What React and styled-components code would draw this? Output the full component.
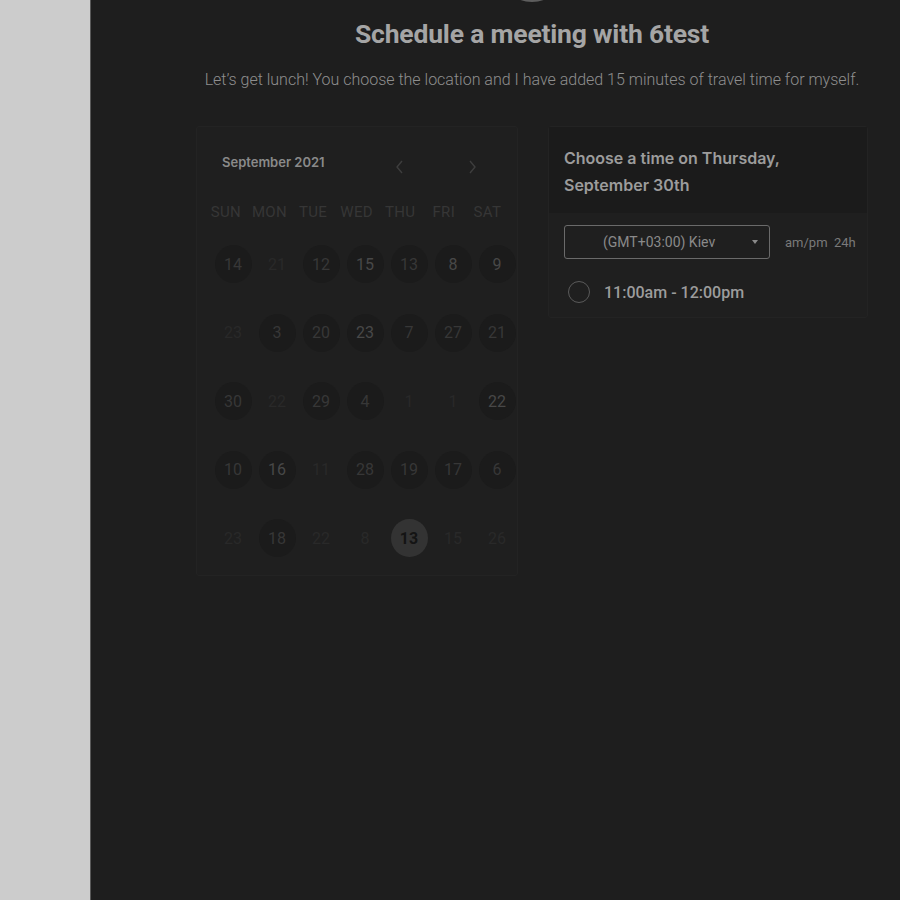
import React from 'react'
import styled, { createGlobalStyle } from 'styled-components'

const GlobalStyle = createGlobalStyle`
  html, body {
    margin: 0;
    padding: 0;
    background: #1e1e1e;
  }
  body {
    font-family: Roboto, "Liberation Sans", sans-serif;
  }
`

const weekdays = ['SUN', 'MON', 'TUE', 'WED', 'THU', 'FRI', 'SAT']

// kind: c = circle, h = circle with brighter number, o = off (no circle), s = selected
const weeks = [
    [['14', 'c'], ['21', 'o'], ['12', 'c'], ['15', 'h'], ['13', 'c'], ['8', 'h'], ['9', 'h']],
    [['23', 'o'], ['3', 'c'], ['20', 'c'], ['23', 'h'], ['7', 'c'], ['27', 'c'], ['21', 'c']],
    [['30', 'c'], ['22', 'o'], ['29', 'c'], ['4', 'c'], ['1', 'o'], ['1', 'o'], ['22', 'h']],
    [['10', 'c'], ['16', 'h'], ['11', 'o'], ['28', 'c'], ['19', 'c'], ['17', 'c'], ['6', 'c']],
    [['23', 'o'], ['18', 'c'], ['22', 'o'], ['8', 'o'], ['13', 's'], ['15', 'o'], ['26', 'o']],
]

export default function App () {
    return (
        <Page>
            <GlobalStyle />
            <Sidebar />
            <Main>
                <Avatar />
                <Title>Schedule a meeting with 6test</Title>
                <Subtitle>Let’s get lunch! You choose the location and I have added 15 minutes of travel time for myself.</Subtitle>
                <Panels>
                    <Calendar>
                        <CalHeader>
                            <Month>September 2021</Month>
                            <Arrows>
                                <Arrow viewBox="0 0 10 16"><path d="M7 2 L2 8 L7 14" /></Arrow>
                                <Arrow viewBox="0 0 10 16"><path d="M3 2 L8 8 L3 14" /></Arrow>
                            </Arrows>
                        </CalHeader>
                        <Weekdays>
                            {weekdays.map(d => <Weekday key={d}>{d}</Weekday>)}
                        </Weekdays>
                        <Days>
                            {weeks.flat().map(([n, kind], i) => (
                                <DayCell key={i}>
                                    <Day $kind={kind}>{n}</Day>
                                </DayCell>
                            ))}
                        </Days>
                    </Calendar>
                    <TimePanel>
                        <TimeHeader>Choose a time on Thursday, September 30th</TimeHeader>
                        <TimeBody>
                            <ZoneRow>
                                <ZoneSelect>
                                    <span>(GMT+03:00) Kiev</span>
                                    <Caret />
                                </ZoneSelect>
                                <Format>am/pm&nbsp;&nbsp;24h</Format>
                            </ZoneRow>
                            <Slot>
                                <Radio />
                                <SlotText>11:00am - 12:00pm</SlotText>
                            </Slot>
                        </TimeBody>
                    </TimePanel>
                </Panels>
            </Main>
        </Page>
    )
}

const Page = styled.div`
  display: flex;
  min-height: 900px;
  overflow: hidden;
`

const Sidebar = styled.div`
  width: 90px;
  flex-shrink: 0;
  background: #cccccc;
  border-right: 1px solid #595959;
`

const Main = styled.div`
  flex: 1;
  background: #1e1e1e;
  display: flex;
  flex-direction: column;
  align-items: center;
  padding: 0 32px 0 105px;
`

const Avatar = styled.div`
  width: 62px;
  height: 62px;
  margin-top: -64px;
  border-radius: 50%;
  background: #2a2a2a;
  border: 2px solid #5e5e5e;
`

const Title = styled.h1`
  margin: 15px 0 0;
  font-family: Roboto, sans-serif;
  font-weight: 700;
  font-size: 26.5px;
  line-height: 34px;
  color: #a5a5a5;
  letter-spacing: -0.2px;
`

const Subtitle = styled.p`
  margin: 18px 0 0;
  font-family: Roboto, sans-serif;
  font-weight: 300;
  font-size: 16px;
  line-height: 22px;
  color: #8e8e8e;
`

const Panels = styled.div`
  display: flex;
  gap: 30px;
  width: 100%;
  margin-top: 35px;
  align-items: flex-start;
`

const Calendar = styled.div`
  width: 322px;
  height: 450px;
  box-sizing: border-box;
  background: #1f1f1f;
  border: 1px solid #232323;
  border-radius: 3px;
  padding: 22px 0 0;
`

const CalHeader = styled.div`
  display: flex;
  align-items: center;
  padding: 0 0 0 25px;
  height: 26px;
`

const Month = styled.div`
  font-family: Inter, sans-serif;
  font-weight: 600;
  font-size: 13px;
  color: #8a8a8a;
  width: 173px;
`

const Arrows = styled.div`
  display: flex;
  gap: 62px;
  margin-top: 9px;
`

const Arrow = styled.svg`
  width: 10px;
  height: 16px;
  fill: none;
  stroke: #3e3e3e;
  stroke-width: 1.4;
`

const Weekdays = styled.div`
  display: grid;
  grid-template-columns: repeat(7, 43.6px);
  padding-left: 7px;
  margin-top: 25px;
`

const Weekday = styled.div`
  text-align: center;
  font-family: Roboto, sans-serif;
  font-size: 15px;
  line-height: 24px;
  color: #363636;
  letter-spacing: 0.3px;
`

const Days = styled.div`
  display: grid;
  grid-template-columns: repeat(7, 44px);
  grid-auto-rows: 68.5px;
  padding-left: 14px;
  margin-top: 6px;
`

const DayCell = styled.div`
  display: flex;
  align-items: center;
  justify-content: center;
`

const dayColors = {
    c: { bg: '#1b1b1b', fg: '#373737' },
    h: { bg: '#1b1b1b', fg: '#484848' },
    o: { bg: 'transparent', fg: '#292929' },
    s: { bg: '#333333', fg: '#141414' },
}

const Day = styled.div`
  width: 37px;
  height: 38px;
  border-radius: 50%;
  display: flex;
  align-items: center;
  justify-content: center;
  font-family: Roboto, sans-serif;
  font-size: 16px;
  font-weight: ${p => p.$kind === 's' ? 700 : 400};
  background: ${p => dayColors[p.$kind].bg};
  color: ${p => dayColors[p.$kind].fg};
`

const TimePanel = styled.div`
  width: 320px;
  box-sizing: border-box;
  background: #1f1f1f;
  border: 1px solid #232323;
  border-radius: 3px;
  padding-bottom: 14px;
`

const TimeHeader = styled.div`
  background: #1b1b1b;
  padding: 18px 60px 14px 15px;
  font-family: Inter, sans-serif;
  font-weight: 600;
  font-size: 16px;
  line-height: 27px;
  color: #9c9c9c;
`

const TimeBody = styled.div`
  padding: 12px 15px 0;
`

const ZoneRow = styled.div`
  display: flex;
  align-items: center;
  gap: 15px;
`

const ZoneSelect = styled.div`
  width: 206px;
  height: 34px;
  flex-shrink: 0;
  box-sizing: border-box;
  border: 1px solid #6a6a6a;
  border-radius: 3px;
  display: flex;
  align-items: center;
  padding: 0 11px 0 38px;
  font-family: Roboto, sans-serif;
  font-size: 14px;
  color: #8a8a8a;
  span {
    flex: 1;
  }
`

const Caret = styled.div`
  width: 0;
  height: 0;
  border-left: 3.5px solid transparent;
  border-right: 3.5px solid transparent;
  border-top: 4px solid #8a8a8a;
`

const Format = styled.div`
  font-family: Roboto, sans-serif;
  font-size: 13px;
  color: #7a7a7a;
  white-space: nowrap;
`

const Slot = styled.div`
  display: flex;
  align-items: center;
  gap: 14px;
  margin-top: 22px;
  padding-left: 4px;
`

const Radio = styled.div`
  width: 20px;
  height: 20px;
  border-radius: 50%;
  border: 1px solid #5a5a5a;
`

const SlotText = styled.div`
  font-family: Roboto, sans-serif;
  font-weight: 500;
  font-size: 16px;
  color: #9c9c9c;
`
